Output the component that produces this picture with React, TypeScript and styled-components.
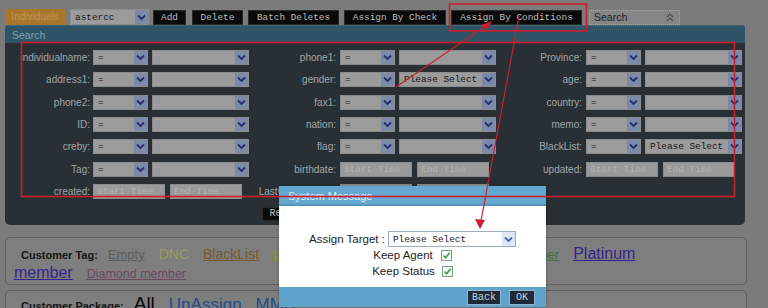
import styled, { createGlobalStyle } from "styled-components";

const GlobalStyle = createGlobalStyle`
  html, body {
    margin: 0;
    padding: 0;
  }
  body {
    background: #7b7b7b;
    font-family: "Liberation Sans", Arial, sans-serif;
    overflow: hidden;
  }
`;

const Page = styled.div`
  position: relative;
  width: 768px;
  height: 308px;
  box-sizing: border-box;
  padding: 9px 0 0 5px;
  overflow: hidden;
`;

/* ---------- toolbar ---------- */

const Toolbar = styled.div`
  display: flex;
  align-items: center;
  height: 16px;
`;

const Tab = styled.div`
  width: 60px;
  height: 16px;
  line-height: 16px;
  background: #a8772d;
  color: #c2934d;
  font-size: 10px;
  text-align: center;
  margin-right: 5px;
`;

const ToolButton = styled.div<{ $w: number; $gap?: number }>`
  width: ${({ $w }) => $w}px;
  height: 15px;
  box-sizing: border-box;
  margin-left: ${({ $gap }) => $gap ?? 5}px;
  background: #0a0a0a;
  border: 1px solid #2a2a2a;
  color: #bdbdbd;
  font-family: "Liberation Mono", "Courier New", monospace;
  font-size: 9.4px;
  line-height: 13px;
  text-align: center;
  white-space: nowrap;
`;

const SearchPicker = styled.div`
  width: 91px;
  height: 15px;
  box-sizing: border-box;
  margin-left: 7px;
  display: flex;
  align-items: center;
  justify-content: space-between;
  padding: 0 5px 0 4px;
  background: #858585;
  border: 1px dotted #a5a5a5;
  color: #1d1d1d;
  font-size: 10.5px;
`;

/* ---------- select-like fields ---------- */

const Select = styled.div<{ $w: number; $light?: boolean; $h?: number }>`
  width: ${({ $w }) => $w}px;
  height: ${({ $h }) => $h ?? 15}px;
  box-sizing: border-box;
  display: flex;
  align-items: stretch;
  background: ${({ $light }) => ($light ? "#ffffff" : "#9b9b9b")};
  border: 1px solid ${({ $light }) => ($light ? "#9eaac0" : "#8d8d8d")};
  color: #161616;
  font-family: "Liberation Mono", "Courier New", monospace;
  font-size: 9.4px;
`;

const SelectText = styled.span`
  flex: 1;
  padding-left: 4px;
  display: flex;
  align-items: center;
  white-space: nowrap;
  overflow: hidden;
`;

const ArrowBox = styled.span<{ $light?: boolean }>`
  width: 13px;
  display: flex;
  align-items: center;
  justify-content: center;
  background: ${({ $light }) => ($light ? "#dfe7f6" : "#7c89a9")};
  color: ${({ $light }) => ($light ? "#4a68a8" : "#25306a")};
`;

const DateInput = styled.div`
  width: 72px;
  height: 15px;
  box-sizing: border-box;
  background: #9a9a9a;
  border: 1px solid #8d8d8d;
  color: #b2b2b2;
  font-family: "Liberation Mono", "Courier New", monospace;
  font-size: 9.4px;
  line-height: 13px;
  padding-left: 3px;
  white-space: nowrap;
`;

/* ---------- search panel ---------- */

const Panel = styled.div`
  width: 740px;
  background: #283036;
  border-radius: 4px 4px 5px 5px;
  overflow: hidden;
`;

const PanelHeader = styled.div`
  height: 18px;
  line-height: 18px;
  background: #2d5467;
  border-top: 1px solid #3b6679;
  box-sizing: border-box;
  color: #7ea3b6;
  font-size: 10.5px;
  padding-left: 7px;
`;

const FormGrid = styled.div`
  display: grid;
  grid-template-columns: 88px 156px 91px 156px 90px 156px;
  grid-auto-rows: 15px;
  row-gap: 7.33px;
  padding-top: 7px;
`;

const Label = styled.div<{ $pad: number }>`
  text-align: right;
  padding-right: ${({ $pad }) => $pad}px;
  color: #a2a6a8;
  font-size: 10px;
  line-height: 15px;
  white-space: nowrap;
`;

const FieldPair = styled.div<{ $gap?: number }>`
  display: flex;
  gap: ${({ $gap }) => $gap ?? 4}px;
`;

const PanelButtons = styled.div`
  display: flex;
  gap: 6px;
  padding: 8px 0 4px 257px;
`;

const PanelButton = styled(ToolButton)`
  height: 14px;
  line-height: 12px;
  margin-left: 0;
  font-size: 10px;
`;

/* ---------- tag boxes ---------- */

const TagBox = styled.div<{ $h: number; $top: number; $pt: number }>`
  width: 742px;
  height: ${({ $h }) => $h}px;
  box-sizing: border-box;
  margin-top: ${({ $top }) => $top}px;
  padding: ${({ $pt }) => $pt}px 56px 0 8px;
  background: #7e7e7e;
  border: 1px solid #5f5f5f;
  border-radius: 5px;
  line-height: 18px;
`;

const TagTitle = styled.span`
  margin-left: 7px;
  margin-right: 10px;
  color: #141414;
  font-size: 11px;
  font-weight: bold;
`;

const TagLink = styled.a<{ $c: string; $s: number; $u?: boolean }>`
  color: ${({ $c }) => $c};
  font-size: ${({ $s }) => $s}px;
  text-decoration: ${({ $u }) => ($u === false ? "none" : "underline")};
  margin-right: 14px;
`;

const PackageLine = styled.div`
  line-height: 24px;
  white-space: nowrap;
`;

/* ---------- dialog ---------- */

const Dialog = styled.div`
  position: absolute;
  left: 279px;
  top: 186px;
  width: 267px;
  display: flex;
  flex-direction: column;
  box-shadow: 0 0 3px rgba(0, 0, 0, 0.3);
`;

const DialogTitle = styled.div`
  height: 20px;
  line-height: 20px;
  box-sizing: border-box;
  background: #63a8d1;
  border-bottom: 2px solid #5596bf;
  color: #e4f1f8;
  font-size: 11px;
  padding-left: 9px;
`;

const DialogBody = styled.div`
  height: 81px;
  box-sizing: border-box;
  background: #ffffff;
  padding-top: 25px;
  display: flex;
  flex-direction: column;
  align-items: center;
  color: #1e1e1e;
  font-size: 11.5px;
`;

const DialogRow = styled.div<{ $gap: number; $h: number }>`
  display: flex;
  align-items: center;
  gap: ${({ $gap }) => $gap}px;
  height: ${({ $h }) => $h}px;
`;

const CheckBox = styled.span`
  width: 11px;
  height: 11px;
  box-sizing: border-box;
  border: 1px solid #7d9a8a;
  background: #f8fff8;
  display: flex;
  align-items: center;
  justify-content: center;
`;

const DialogFooter = styled.div`
  height: 20px;
  background: #5ea3cb;
  display: flex;
  align-items: center;
  justify-content: flex-end;
  gap: 8px;
  padding-right: 11px;
`;

const DialogButton = styled.div<{ $w: number }>`
  width: ${({ $w }) => $w}px;
  height: 15px;
  box-sizing: border-box;
  background: #1d2b39;
  border: 1px solid #93b6cd;
  color: #c9d6df;
  font-family: "Liberation Mono", "Courier New", monospace;
  font-size: 10px;
  line-height: 13px;
  text-align: center;
`;

/* ---------- annotation layer ---------- */

const Annotations = styled.svg`
  position: absolute;
  left: 0;
  top: 0;
  pointer-events: none;
`;

const Chevron = () => (
  <svg width="9" height="7" viewBox="0 0 9 7">
    <path d="M1 1.5 L4.5 5 L8 1.5" fill="none" stroke="currentColor" strokeWidth="1.8" />
  </svg>
);

const DoubleUp = () => (
  <svg width="8" height="9" viewBox="0 0 8 9">
    <path d="M1 4 L4 1 L7 4 M1 8 L4 5 L7 8" fill="none" stroke="#4e4e4e" strokeWidth="1.2" />
  </svg>
);

const Check = () => (
  <svg width="9" height="9" viewBox="0 0 9 9">
    <path d="M1.5 4.5 L3.6 6.8 L7.6 1.8" fill="none" stroke="#2f9a3a" strokeWidth="1.5" />
  </svg>
);

const Drop = ({ w, text = "", light, h }: { w: number; text?: string; light?: boolean; h?: number }) => (
  <Select $w={w} $light={light} $h={h}>
    <SelectText>{text}</SelectText>
    <ArrowBox $light={light}>
      <Chevron />
    </ArrowBox>
  </Select>
);

type Field =
  | { label: string; kind: "select"; value?: string }
  | { label: string; kind: "date" }
  | null;

const rows: Field[][] = [
  [
    { label: "individualname:", kind: "select" },
    { label: "phone1:", kind: "select" },
    { label: "Province:", kind: "select" },
  ],
  [
    { label: "address1:", kind: "select" },
    { label: "gender:", kind: "select", value: "Please Select" },
    { label: "age:", kind: "select" },
  ],
  [
    { label: "phone2:", kind: "select" },
    { label: "fax1:", kind: "select" },
    { label: "country:", kind: "select" },
  ],
  [
    { label: "ID:", kind: "select" },
    { label: "nation:", kind: "select" },
    { label: "memo:", kind: "select" },
  ],
  [
    { label: "creby:", kind: "select" },
    { label: "flag:", kind: "select" },
    { label: "BlackList:", kind: "select", value: "Please Select" },
  ],
  [
    { label: "Tag:", kind: "select" },
    { label: "birthdate:", kind: "date" },
    { label: "updated:", kind: "date" },
  ],
  [
    { label: "created:", kind: "date" },
    { label: "LastContactDate:", kind: "date" },
    null,
  ],
];

const labelPad = [3, 4, 4];

const FieldCells = ({ field, col }: { field: Field; col: number }) => {
  if (!field) {
    return (
      <>
        <div />
        <div />
      </>
    );
  }
  return (
    <>
      <Label $pad={labelPad[col]}>{field.label}</Label>
      {field.kind === "select" ? (
        <FieldPair>
          <Drop w={55} text="=" />
          <Drop w={97} text={field.value} />
        </FieldPair>
      ) : (
        <FieldPair $gap={5}>
          <DateInput>Start Time</DateInput>
          <DateInput>End Time</DateInput>
        </FieldPair>
      )}
    </>
  );
};

const App = () => {
  return (
    <Page>
      <GlobalStyle />
      <Toolbar>
        <Tab>Individuals</Tab>
        <Drop w={79} h={16} text="astercc" />
        <ToolButton $w={33} $gap={4}>Add</ToolButton>
        <ToolButton $w={51} $gap={6}>Delete</ToolButton>
        <ToolButton $w={91}>Batch Deletes</ToolButton>
        <ToolButton $w={102}>Assign By Check</ToolButton>
        <ToolButton $w={131}>Assign By Conditions</ToolButton>
        <SearchPicker>
          <span>Search</span>
          <DoubleUp />
        </SearchPicker>
      </Toolbar>

      <Panel>
        <PanelHeader>Search</PanelHeader>
        <FormGrid>
          {rows.map((row, r) =>
            row.map((field, c) => <FieldCells key={`${r}-${c}`} field={field} col={c} />)
          )}
        </FormGrid>
        <PanelButtons>
          <PanelButton $w={45}>Reset</PanelButton>
          <PanelButton $w={50}>Search</PanelButton>
        </PanelButtons>
      </Panel>

      <TagBox $h={48} $top={12} $pt={7}>
        <TagTitle>Customer Tag:</TagTitle>
        <TagLink $c="#5c5c5c" $s={13}>Empty</TagLink>
        <TagLink $c="#9a9a64" $s={14} $u={false}>DNC</TagLink>
        <TagLink $c="#7b5a2e" $s={14}>BlackList</TagLink>
        <TagLink $c="#869638" $s={14}>potential</TagLink>
        <TagLink $c="#2c5a8a" $s={14}>VIP</TagLink>
        <TagLink $c="#3c6a3a" $s={14}>Gold member</TagLink>
        <TagLink $c="#426e3c" $s={13}>Silver member</TagLink>
        <TagLink $c="#36248a" $s={16}>Platinum member</TagLink>
        <TagLink $c="#6a4a5c" $s={12.5}>Diamond member</TagLink>
      </TagBox>

      <TagBox $h={40} $top={5} $pt={1}>
        <PackageLine>
          <TagTitle>Customer Package:</TagTitle>
          <TagLink $c="#050505" $s={19} $u={false}>All</TagLink>
          <TagLink $c="#1f4d8c" $s={17} $u={false}>UnAssign</TagLink>
          <TagLink $c="#1f4d8c" $s={17} $u={false}>MMS</TagLink>
        </PackageLine>
      </TagBox>

      <Dialog>
        <DialogTitle>System Message</DialogTitle>
        <DialogBody>
          <DialogRow $gap={3} $h={16}>
            <span>Assign Target :</span>
            <Drop w={128} h={16} text="Please Select" light />
          </DialogRow>
          <DialogRow $gap={8} $h={16}>
            <span>Keep Agent</span>
            <CheckBox>
              <Check />
            </CheckBox>
          </DialogRow>
          <DialogRow $gap={7} $h={16}>
            <span>Keep Status</span>
            <CheckBox>
              <Check />
            </CheckBox>
          </DialogRow>
        </DialogBody>
        <DialogFooter>
          <DialogButton $w={34}>Back</DialogButton>
          <DialogButton $w={26}>OK</DialogButton>
        </DialogFooter>
      </Dialog>

      <Annotations width="768" height="308" viewBox="0 0 768 308">
        <g stroke="#cc1f2e" fill="none" strokeWidth="1.6">
          <rect x="449.5" y="4" width="137" height="27" />
          <rect x="21.5" y="42.5" width="713" height="154" />
          <line x1="396" y1="87" x2="487" y2="25" strokeWidth="1.2" />
          <line x1="519" y1="16" x2="481" y2="221" strokeWidth="1.2" />
        </g>
        <g fill="#d01c2c">
          <polygon points="492,21 481,25 487,30" />
          <polygon points="480,229 475,219 485,220" />
        </g>
      </Annotations>
    </Page>
  );
};

export default App;
